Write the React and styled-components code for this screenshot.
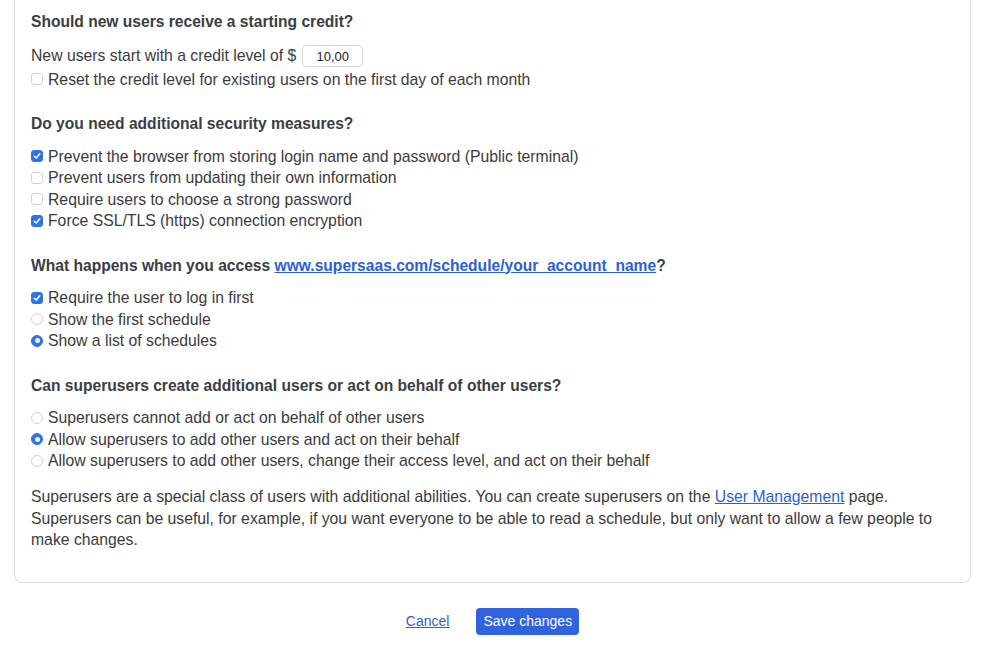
import React from "react";
import styled, { createGlobalStyle } from "styled-components";

const GlobalStyle = createGlobalStyle`
    body {
        margin: 0;
        background: #fff;
        font-family: "Liberation Sans", Arial, sans-serif;
        color: #3b3b3b;
    }
`;

const Page = styled.div`
    padding: 0 13px 0 14px;
`;

const Card = styled.div`
    border: 1px solid #dcdcdc;
    border-top: none;
    border-radius: 0 0 8px 8px;
    padding: 11px 16px 31px 16px;
    font-size: 15.75px;
    line-height: 21.5px;
`;

const Section = styled.div`
    margin-bottom: ${(p) => (p.$last ? "0" : "23px")};
`;

const Heading = styled.div`
    font-weight: bold;
    font-size: 15.6px;
    color: #3a3e43;
    margin-bottom: 11px;
`;

const Row = styled.label`
    display: flex;
    align-items: center;
    height: ${(p) => (p.$tall ? "25px" : "21.5px")};
    white-space: nowrap;
`;

const CreditInput = styled.input`
    width: 61px;
    height: 22px;
    box-sizing: border-box;
    margin-left: 6px;
    border: 1px solid #d6d6d6;
    border-radius: 4px;
    font-family: inherit;
    font-size: 13px;
    color: #222;
    text-align: center;
    padding: 0;
`;

const Box = styled.span`
    width: 12px;
    height: 12px;
    box-sizing: border-box;
    margin-right: 5px;
    flex-shrink: 0;
    border-radius: ${(p) => (p.$round ? "50%" : "3px")};
    border: 1px solid ${(p) => (p.$on ? "#2f73e8" : "#d2d2d2")};
    background: ${(p) => (p.$on ? "#2f73e8" : "#fff")};
    display: flex;
    align-items: center;
    justify-content: center;
`;

const Dot = styled.span`
    width: 5px;
    height: 5px;
    border-radius: 50%;
    background: #fff;
`;

const Link = styled.a`
    color: #2b5fd9;
    text-decoration: underline;
`;

const Note = styled.p`
    margin: 14.5px 0 0 0;
`;

const Actions = styled.div`
    display: flex;
    justify-content: center;
    align-items: center;
    gap: 27px;
    padding-top: 25px;
`;

const CancelLink = styled.a`
    color: #2b5fd9;
    text-decoration: underline;
    font-size: 14px;
    font-family: "Liberation Sans", Arial, sans-serif;
`;

const SaveButton = styled.button`
    background: #2f63e0;
    color: #fff;
    border: none;
    border-radius: 4px;
    height: 27px;
    padding: 0 7px;
    font-size: 14px;
    font-family: "Liberation Sans", Arial, sans-serif;
`;

function Check({ on }) {
    return (
        <Box $on={on}>
            {on && (
                <svg width="8" height="8" viewBox="0 0 8 8">
                    <path d="M1.2 4.2 L3.2 6 L6.8 1.8" fill="none" stroke="#fff" strokeWidth="1.5" strokeLinecap="round" strokeLinejoin="round" />
                </svg>
            )}
        </Box>
    );
}

function Radio({ on }) {
    return <Box $round $on={on}>{on && <Dot />}</Box>;
}

export default function App() {
    return (
        <Page>
            <GlobalStyle />
            <Card>
                <Section>
                    <Heading>Should new users receive a starting credit?</Heading>
                    <Row $tall>
                        New users start with a credit level of $
                        <CreditInput defaultValue="10,00" />
                    </Row>
                    <Row><Check />Reset the credit level for existing users on the first day of each month</Row>
                </Section>

                <Section>
                    <Heading>Do you need additional security measures?</Heading>
                    <Row><Check on />Prevent the browser from storing login name and password (Public terminal)</Row>
                    <Row><Check />Prevent users from updating their own information</Row>
                    <Row><Check />Require users to choose a strong password</Row>
                    <Row><Check on />Force SSL/TLS (https) connection encryption</Row>
                </Section>

                <Section>
                    <Heading>
                        What happens when you access <Link href="#">www.supersaas.com/schedule/your_account_name</Link>?
                    </Heading>
                    <Row><Check on />Require the user to log in first</Row>
                    <Row><Radio />Show the first schedule</Row>
                    <Row><Radio on />Show a list of schedules</Row>
                </Section>

                <Section $last>
                    <Heading>Can superusers create additional users or act on behalf of other users?</Heading>
                    <Row><Radio />Superusers cannot add or act on behalf of other users</Row>
                    <Row><Radio on />Allow superusers to add other users and act on their behalf</Row>
                    <Row><Radio />Allow superusers to add other users, change their access level, and act on their behalf</Row>
                </Section>

                <Note>
                    Superusers are a special class of users with additional abilities. You can create superusers on the{" "}
                    <Link href="#">User Management</Link> page. Superusers can be useful, for example, if you want
                    everyone to be able to read a schedule, but only want to allow a few people to make changes.
                </Note>
            </Card>
            <Actions>
                <CancelLink href="#">Cancel</CancelLink>
                <SaveButton>Save changes</SaveButton>
            </Actions>
        </Page>
    );
}
